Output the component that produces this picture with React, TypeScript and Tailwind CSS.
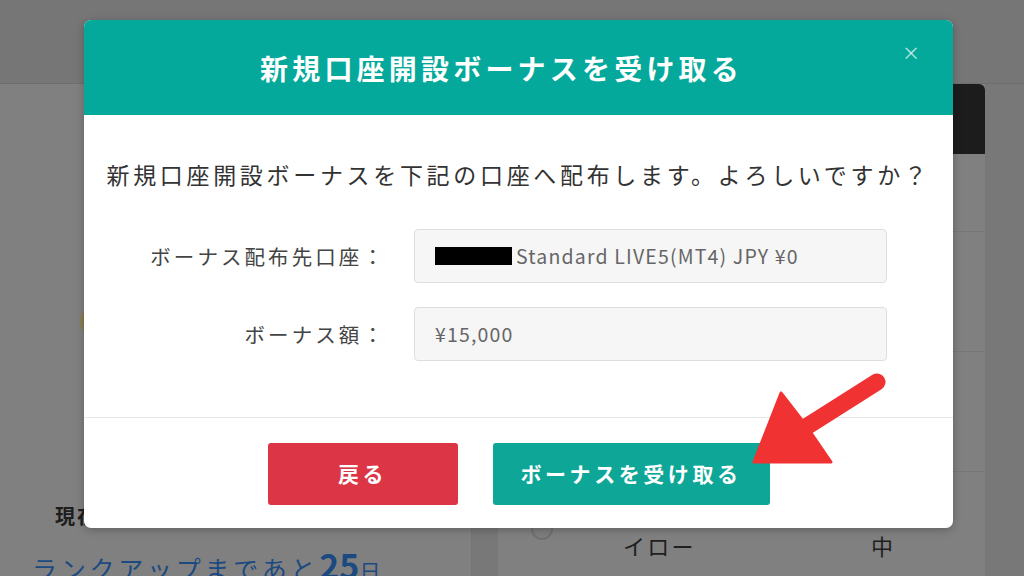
import React from 'react';

const Background: React.FC = () => {
  return (
    <div className="flex flex-col h-full">
      <div className="h-[84px] shrink-0 bg-[#767676] border-b border-[#6e6e6e]" />
      <div className="flex flex-1 min-h-0">
        <div className="w-[472px] bg-[#808080] border-r border-[#757575] flex flex-col pt-[220px]">
          <div className="w-[40px] h-[34px] ml-[80px] rounded-full bg-[#8a7c54]" />
          <div className="flex-1" />
          <p className="ml-[55px] text-[20px] font-bold text-[#1d1d1d] tracking-[0.1em] leading-[30px]">現在のランク</p>
          <p className="ml-[32px] mt-[12px] mb-[-16px] text-[25px] text-[#1c4a80] tracking-[0.15em] leading-[44px] whitespace-nowrap">
            ランクアップまであと<span className="text-[34px] font-bold tracking-normal">25</span><span className="text-[21px]">日</span>
          </p>
        </div>
        <div className="ml-[26px] w-[487px] bg-[#808080] flex flex-col">
          <div className="h-[70px] shrink-0 bg-[#1c1c1c] rounded-tr-[6px]" />
          <div className="h-[78px] shrink-0 border-b border-[#777]" />
          <div className="h-[120px] shrink-0 border-b border-[#777]" />
          <div className="h-[120px] shrink-0 border-b border-[#777]" />
          <div className="flex items-start pt-[46px]">
            <div className="ml-[33px] w-[22px] h-[22px] rounded-full border-2 border-[#707070] bg-[#7e7e7e]" />
            <span className="ml-[70px] mt-[12px] text-[22px] text-[#1f1f1f] tracking-[0.1em] leading-[30px]">イロー</span>
            <span className="ml-auto mr-[92px] mt-[12px] text-[22px] text-[#1f1f1f] leading-[30px]">中</span>
          </div>
        </div>
      </div>
    </div>
  );
};

const Field: React.FC<{ label: string; children: React.ReactNode; className?: string }> = ({ label, children, className }) => (
  <div className={`flex items-center ${className ?? ''}`}>
    <span className="w-[302px] text-right text-[20.5px] text-[#444] tracking-[0.15em] whitespace-nowrap">{label}</span>
    <div className="ml-[28px] w-[473px] h-[54px] flex items-center px-[20px] bg-[#f6f6f6] border border-[#dedede] rounded-[4px] text-[19.5px] text-[#666] tracking-[0.06em] whitespace-nowrap">
      {children}
    </div>
  </div>
);

const Modal: React.FC = () => {
  return (
    <div className="absolute left-[84px] top-[20px] w-[869px] h-[508px] bg-white rounded-[7px] overflow-hidden shadow-[0_2px_8px_rgba(0,0,0,0.25)] flex flex-col">
      <div className="relative h-[95px] shrink-0 bg-[#04a99b] flex items-center justify-center pr-[34px]">
        <h1 className="text-white text-[28px] font-bold tracking-[0.15em]">新規口座開設ボーナスを受け取る</h1>
        <span className="absolute right-[33px] top-[18px] text-[18px] leading-[28px] text-white/75">×</span>
      </div>
      <div className="flex-1 flex flex-col pt-[42px] border-b border-[#e6e6e6]">
        <p className="text-center text-[23px] leading-[34px] tracking-[0.16em] text-[#333] whitespace-nowrap">
          新規口座開設ボーナスを下記の口座へ配布します。よろしいですか？
        </p>
        <Field label="ボーナス配布先口座：" className="mt-[38px]">
          <span className="inline-block w-[77px] h-[18px] bg-black mr-[4px]" />
          Standard LIVE5(MT4) JPY ¥0
        </Field>
        <Field label="ボーナス額：" className="mt-[24px]">
          ¥15,000
        </Field>
      </div>
      <div className="h-[110px] shrink-0 flex justify-center items-start pt-[25px] gap-[35px]">
        <button className="w-[190px] h-[62px] rounded-[3px] bg-[#dc3545] text-white text-[21px] font-bold tracking-[0.17em]">戻る</button>
        <button className="w-[277px] h-[62px] rounded-[3px] bg-[#0ea697] text-white text-[21px] font-bold tracking-[0.17em]">ボーナスを受け取る</button>
      </div>
    </div>
  );
};

const Arrow: React.FC = () => (
  <svg className="absolute inset-0 pointer-events-none" width="1024" height="576" viewBox="0 0 1024 576">
    <line x1="877" y1="382" x2="806" y2="427" stroke="#f13232" strokeWidth="17" strokeLinecap="round" />
    <polygon points="754,462 781,393 805,424 831,462" fill="#f13232" stroke="#f13232" strokeWidth="3" strokeLinejoin="round" />
  </svg>
);

export default function App() {
  return (
    <div className="relative w-[1024px] h-[576px] overflow-hidden bg-[#787878] font-['Noto_Sans_CJK_JP','Noto_Sans',sans-serif]">
      <Background />
      <Modal />
      <Arrow />
    </div>
  );
}
